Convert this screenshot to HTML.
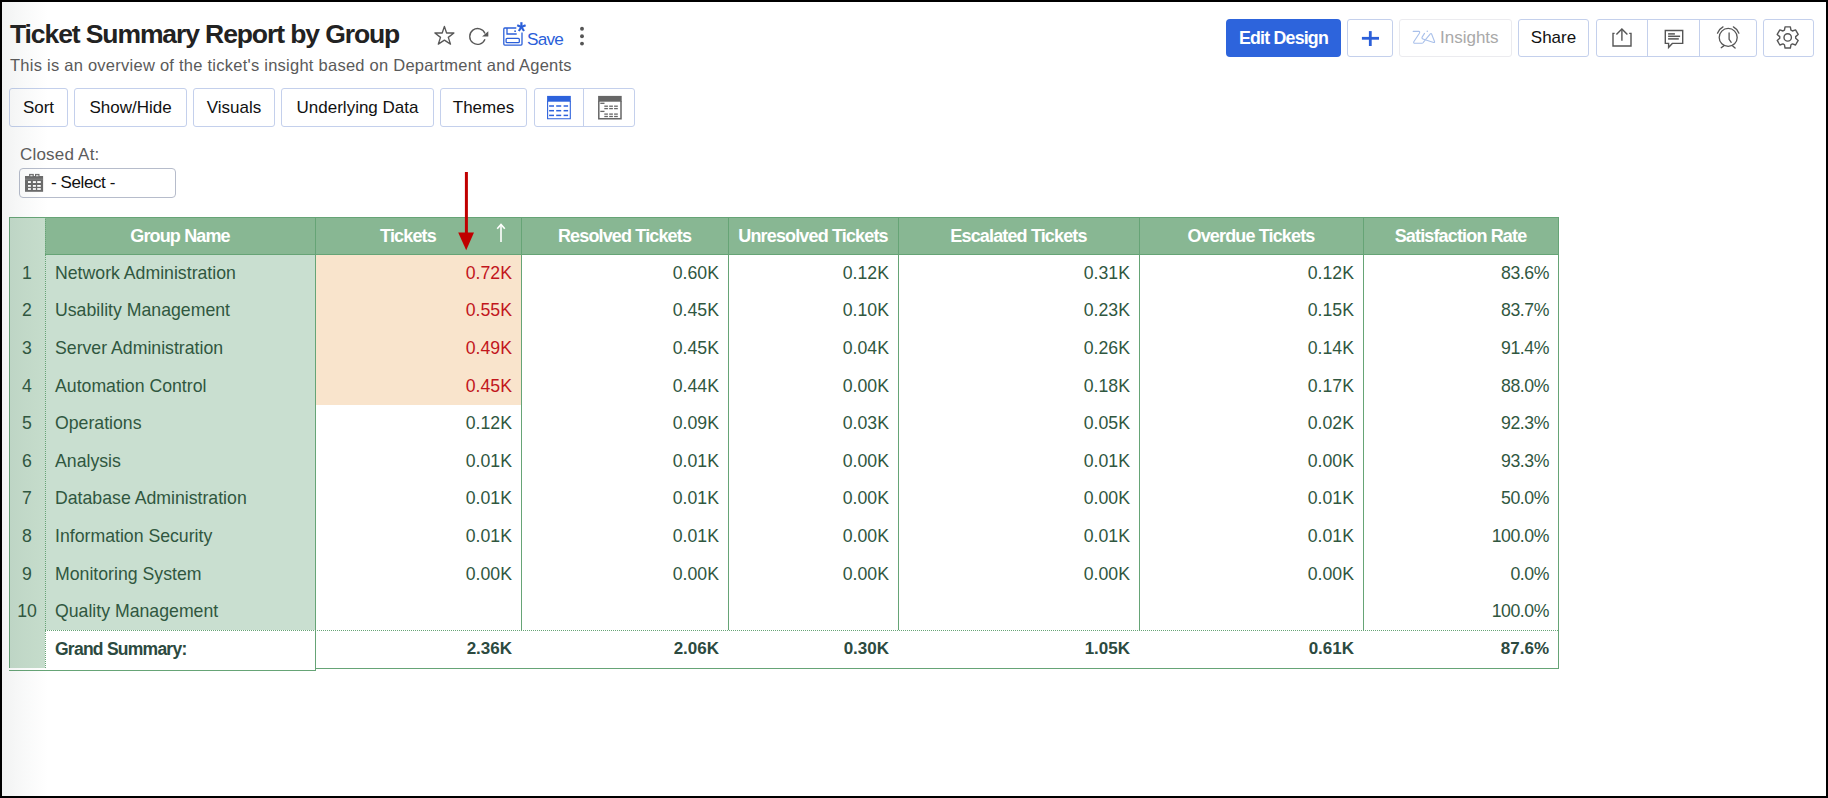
<!DOCTYPE html>
<html><head><meta charset="utf-8"><title>Ticket Summary Report by Group</title>
<style>
*{margin:0;padding:0;box-sizing:border-box}
html,body{width:1828px;height:798px;overflow:hidden;background:#fff}
body{position:relative;font-family:"Liberation Sans",sans-serif;color:#222}
.a{position:absolute;white-space:nowrap}
.frame{position:absolute;left:0;top:0;width:1828px;height:798px;border-style:solid;border-color:#000;border-width:2px;z-index:50}
.shade{position:absolute;left:2px;top:2px;width:46px;height:794px;background:linear-gradient(to right,rgba(60,80,80,0.07),rgba(60,80,80,0.03) 50%,rgba(60,80,80,0));z-index:40}
.btn{position:absolute;border:1px solid #c4d0ec;border-radius:3px;background:#fff}
.tb{font-size:17px;color:#111;line-height:22px;text-align:center}
.hd{position:absolute;color:#fff;font-weight:bold;font-size:18px;letter-spacing:-0.85px;text-align:center;line-height:20px}
.cell{position:absolute;font-size:17.7px;color:#30573f;line-height:22px}
.gs{font-weight:bold;font-size:17px;color:#2c4a40}
</style></head>
<body>
<div class="frame"></div><div class="shade"></div><div class="a" id="title" style="left:10px;top:17.7px;font-size:26.5px;font-weight:bold;color:#222;letter-spacing:-1.1px;line-height:32px">Ticket Summary Report by Group</div><div class="a" id="sub" style="left:10px;top:54.5px;font-size:16.5px;color:#5a5a5a;letter-spacing:0.25px;line-height:20px">This is an overview of the ticket's insight based on Department and Agents</div><svg class="a" style="left:428px;top:18px" width="66" height="34" viewBox="0 0 66 34">
<polygon points="16.4,8.4 18.6,15.0 25.9,15.0 20.3,19.4 22.5,26.1 16.4,22.1 10.3,26.1 12.5,19.4 6.9,15.0 14.2,15.0" fill="none" stroke="#585858" stroke-width="1.35" stroke-linejoin="round"/>
<path d="M57.0,15.6 A7.9,7.9 0 1 0 57.0,21.3" fill="none" stroke="#585858" stroke-width="1.35"/>
<polygon points="54.1,18.6 60.3,13.2 60.3,18.6" fill="#585858"/>
</svg><svg class="a" style="left:498px;top:16px" width="34" height="34" viewBox="0 0 34 34">
<path d="M18.3,12.0 H6.8 Q5.8,12.0 5.8,13.0 V28.1 Q5.8,29.1 6.8,29.1 H23.0 Q24.0,29.1 24.0,28.1 V16.6" fill="none" stroke="#2b5fd9" stroke-width="1.3"/>
<path d="M9.0,12 V18 H18.7" fill="none" stroke="#2b5fd9" stroke-width="1.3"/>
<rect x="8.1" y="22.3" width="13.2" height="4.4" rx="1" fill="none" stroke="#2b5fd9" stroke-width="1.3"/>
<rect x="16.3" y="14.4" width="1.6" height="1.6" fill="#2b5fd9"/>
<g stroke="#2b5fd9" stroke-width="2.2" stroke-linecap="butt"><line x1="23.4" y1="6.2" x2="23.4" y2="11"/><line x1="19.2" y1="9.2" x2="23.4" y2="11"/><line x1="27.6" y1="9.2" x2="23.4" y2="11"/><line x1="20.8" y1="15" x2="23.4" y2="11"/><line x1="26.0" y1="15" x2="23.4" y2="11"/></g>
</svg><div class="a" id="save" style="left:527px;top:28px;font-size:17.2px;color:#2b5fd9;letter-spacing:-0.8px;line-height:22px">Save</div><svg class="a" style="left:576px;top:24px" width="12" height="24" viewBox="0 0 12 24"><circle cx="6" cy="4.75" r="1.95" fill="#555"/><circle cx="6" cy="12.2" r="1.95" fill="#555"/><circle cx="6" cy="19.6" r="1.95" fill="#555"/></svg><div class="btn" style="left:9px;top:88px;width:59px;height:39px"></div><div class="a tb" style="left:9px;width:59px;top:97px"><span id="b_Sort">Sort</span></div><div class="btn" style="left:74px;top:88px;width:113px;height:39px"></div><div class="a tb" style="left:74px;width:113px;top:97px"><span id="b_Show">Show/Hide</span></div><div class="btn" style="left:193px;top:88px;width:82px;height:39px"></div><div class="a tb" style="left:193px;width:82px;top:97px"><span id="b_Visu">Visuals</span></div><div class="btn" style="left:281px;top:88px;width:153px;height:39px"></div><div class="a tb" style="left:281px;width:153px;top:97px"><span id="b_Unde">Underlying Data</span></div><div class="btn" style="left:440px;top:88px;width:87px;height:39px"></div><div class="a tb" style="left:440px;width:87px;top:97px"><span id="b_Them">Themes</span></div><div class="btn" style="left:534px;top:88px;width:101px;height:39px"></div><div class="a" style="left:583px;top:89px;width:1px;height:37px;background:#c4d0ec"></div><svg class="a" style="left:540px;top:90px" width="90" height="34" viewBox="0 0 90 34">
<rect x="7.1" y="5.9" width="23.7" height="5.8" fill="#2d62dc"/>
<path d="M7.6,11 V28.8 H30.3 V11" fill="none" stroke="#2d62dc" stroke-width="1.1"/>
<g stroke="#2d62dc" stroke-width="1.5"><line x1="9.1" y1="16" x2="14" y2="16"/><line x1="16.2" y1="16" x2="21.2" y2="16"/><line x1="23.6" y1="16" x2="28.1" y2="16"/>
<line x1="9.1" y1="20.7" x2="14" y2="20.7"/><line x1="16.2" y1="20.7" x2="21.2" y2="20.7"/><line x1="23.6" y1="20.7" x2="28.1" y2="20.7"/>
<line x1="9.1" y1="25.4" x2="14" y2="25.4"/><line x1="16.2" y1="25.4" x2="21.2" y2="25.4"/><line x1="23.6" y1="25.4" x2="28.1" y2="25.4"/></g>
<rect x="58.1" y="5.9" width="23.6" height="5.8" fill="#666"/>
<path d="M58.8,11 V28.8 H81 V11" fill="none" stroke="#666" stroke-width="1.5"/>
<g stroke="#666" stroke-width="1.3"><line x1="60.3" y1="13.3" x2="64.5" y2="13.3"/><line x1="60.3" y1="21.4" x2="64.5" y2="21.4"/>
<line x1="64.3" y1="16.2" x2="67.9" y2="16.2"/><line x1="69.2" y1="16.2" x2="72.9" y2="16.2"/><line x1="74.1" y1="16.2" x2="77.8" y2="16.2"/>
<line x1="64.3" y1="18.6" x2="67.9" y2="18.6"/><line x1="69.2" y1="18.6" x2="72.9" y2="18.6"/><line x1="74.1" y1="18.6" x2="77.8" y2="18.6"/>
<line x1="64.3" y1="24.1" x2="67.9" y2="24.1"/><line x1="69.2" y1="24.1" x2="72.9" y2="24.1"/><line x1="74.1" y1="24.1" x2="77.8" y2="24.1"/>
<line x1="64.3" y1="26.5" x2="67.9" y2="26.5"/><line x1="69.2" y1="26.5" x2="72.9" y2="26.5"/><line x1="74.1" y1="26.5" x2="77.8" y2="26.5"/></g>
</svg><div class="a" id="closed" style="left:20px;top:145px;font-size:17px;color:#5c5c5c;letter-spacing:0.2px;line-height:20px">Closed At:</div><div class="a" style="left:19px;top:168px;width:157px;height:30px;border:1px solid #b6bccb;border-radius:4px;background:#fff"></div><div class="a" id="select" style="left:51px;top:173px;font-size:17px;color:#111;letter-spacing:-0.4px;line-height:20px">- Select -</div><svg class="a" style="left:16px;top:164px" width="30" height="32" viewBox="0 0 30 32">
<rect x="9" y="12" width="18.1" height="15.8" fill="#6b6b6b"/>
<rect x="13.1" y="9.9" width="4.7" height="4" fill="#6b6b6b"/><rect x="19" y="9.9" width="4.5" height="4" fill="#6b6b6b"/><rect x="14.3" y="10.9" width="2.3" height="1.4" fill="#ddd"/><rect x="20.1" y="10.9" width="2.3" height="1.4" fill="#ddd"/><rect x="9" y="14.8" width="18.1" height="0.6" fill="#999"/>
<g fill="#fff"><rect x="12" y="17.1" width="2.9" height="1.9"/><rect x="16.9" y="17.1" width="3" height="1.9"/><rect x="21.2" y="17.1" width="3.6" height="1.9"/>
<rect x="12" y="21" width="2.9" height="1.8"/><rect x="16.9" y="21" width="3" height="1.8"/><rect x="21.2" y="21" width="3.6" height="1.8"/>
<rect x="12" y="24.1" width="2.9" height="1.8"/><rect x="16.9" y="24.1" width="3" height="1.8"/><rect x="21.2" y="24.1" width="3.6" height="1.8"/></g>
</svg><div class="a" style="left:1226px;top:19px;width:115px;height:38px;background:#2d64dc;border-radius:4px"></div><div class="a" style="left:1226px;top:27px;width:115px;line-height:22px;text-align:center;color:#fff;font-size:17.8px;font-weight:bold;letter-spacing:-0.8px"><span id="edit">Edit Design</span></div><div class="btn" style="left:1347px;top:19px;width:46px;height:38px"></div><svg class="a" style="left:1352px;top:20px" width="36" height="36" viewBox="0 0 36 36"><rect x="9.9" y="16.9" width="17.1" height="2.8" fill="#2b5fd9"/><rect x="16.9" y="11.1" width="2.8" height="14.9" fill="#2b5fd9"/></svg><div class="btn" style="left:1399px;top:19px;width:113px;height:38px;border-color:#ebebef"></div><svg class="a" style="left:1408px;top:26px" width="32" height="22" viewBox="0 0 32 22">
<path d="M5.2,5.4 H10.8 Q12.2,5.6 11.4,7.2 L5.8,15.8 Q5.2,17.3 7,17.3 H13.8 Q14.8,17.3 15.5,16.2 L22.3,7.8 Q23.1,7.0 23.6,8.0 L26.6,15.8 Q26.7,16.8 25.6,16.5 L17.2,13.8 Q13.4,12.9 14,11.4 L16.5,7.4" fill="none" stroke="#a9c0ea" stroke-width="1.1" stroke-linejoin="round" stroke-linecap="round"/>
<circle cx="19.3" cy="5.2" r="0.8" fill="#a9c0ea"/></svg><div class="a" id="insights" style="left:1440px;top:27px;line-height:22px;color:#a9a9a9;font-size:17px;letter-spacing:0px">Insights</div><div class="btn" style="left:1518px;top:19px;width:71px;height:38px"></div><div class="a" style="left:1518px;top:27px;width:71px;text-align:center;line-height:22px;color:#111;font-size:17px"><span id="share">Share</span></div><div class="btn" style="left:1596px;top:19px;width:161px;height:38px"></div><div class="a" style="left:1647px;top:20px;width:1px;height:36px;background:#c4d0ec"></div><div class="a" style="left:1699px;top:20px;width:1px;height:36px;background:#c4d0ec"></div><div class="btn" style="left:1763px;top:19px;width:51px;height:38px"></div><svg class="a" style="left:1600px;top:20px" width="210" height="36" viewBox="0 0 210 36">
<g fill="none" stroke="#555" stroke-width="1.4">
<path d="M14.6,13.4 H13 V26 H31 V13.4 H29.2"/>
<path d="M21.9,20.8 V9.2"/><path d="M16.4,14.4 L21.9,8.9 L27.4,14.4"/>
<path d="M65.3,10.5 H82.7 V23.4 H72.3 L68.6,27.4 V23.4 H65.3 Z"/>
</g>
<g stroke="#555" stroke-width="1.5"><line x1="68.1" y1="13.9" x2="74.9" y2="13.9"/><line x1="68.1" y1="16.3" x2="80.1" y2="16.3"/><line x1="68.1" y1="18.9" x2="78.8" y2="18.9"/></g>
<g fill="none" stroke="#555" stroke-width="1.3" stroke-linecap="round">
<circle cx="128.2" cy="17.45" r="9"/>
<path d="M117.5,13.2 A11.8,11.8 0 0 1 123.0,6.9"/><path d="M133.4,6.9 A11.8,11.8 0 0 1 138.9,13.2"/>
<path d="M129.1,12.9 V19.3 L131.2,22.3"/>
<path d="M121.2,27.7 L123.7,25.9"/><path d="M132.7,25.9 L135.1,28"/>
</g>
<g transform="translate(187.7,17.45)" fill="none" stroke="#555" stroke-width="1.4" stroke-linejoin="round">
<path d="M-3.25,-7.31 L-2.64,-10.58 L2.64,-10.58 L3.25,-7.31 L4.70,-6.47 L7.84,-7.57 L10.48,-3.00 L7.96,-0.84 L7.96,0.84 L10.48,3.00 L7.84,7.57 L4.70,6.47 L3.25,7.31 L2.64,10.58 L-2.64,10.58 L-3.25,7.31 L-4.70,6.47 L-7.84,7.57 L-10.48,3.00 L-7.96,0.84 L-7.96,-0.84 L-10.48,-3.00 L-7.84,-7.57 L-4.70,-6.47Z"/>
<circle cx="0" cy="0" r="3.7"/>
</g>
</svg>
<div class="a" style="left:9px;top:217px;width:1550px;height:38px;background:#88b793"></div><div class="a" style="left:9px;top:217px;width:36px;height:451px;background:#c6ddcc"></div><div class="a" style="left:45px;top:254px;width:270px;height:376px;background:#c9dfd0"></div><div class="a" style="left:316px;top:255px;width:205px;height:150px;background:#f9e4cc"></div><div class="a" style="left:9px;top:217px;width:1550px;height:1px;background:#66a476"></div><div class="a" style="left:9px;top:217px;width:1px;height:451px;background:#66a476"></div><div class="a" style="left:1558px;top:217px;width:1px;height:452px;background:#66a476"></div><div class="a" style="left:315px;top:668px;width:1244px;height:1px;background:#66a476"></div><div class="a" style="left:9px;top:670px;width:307px;height:1px;background:#66a476"></div><div class="a" style="left:45px;top:254px;width:1514px;height:1px;background:#66a476"></div><div class="a" style="left:315px;top:217px;width:1px;height:413px;background:#66a476"></div><div class="a" style="left:521px;top:217px;width:1px;height:413px;background:#66a476"></div><div class="a" style="left:728px;top:217px;width:1px;height:413px;background:#66a476"></div><div class="a" style="left:898px;top:217px;width:1px;height:413px;background:#66a476"></div><div class="a" style="left:1139px;top:217px;width:1px;height:413px;background:#66a476"></div><div class="a" style="left:1363px;top:217px;width:1px;height:413px;background:#66a476"></div><div class="a" style="left:315px;top:630px;width:1px;height:40px;background:#66a476"></div><div class="a" style="left:45px;top:217px;width:0;height:451px;border-left:1px dotted #66a476"></div><div class="a" style="left:45px;top:630px;width:1513px;height:0;border-top:1px dotted #66a476"></div><div class="hd a" style="left:45px;width:270px;top:226px;"><span id="h_Grou">Group Name</span></div><div class="hd a" style="left:315px;width:206px;top:226px;padding-right:20px;"><span id="h_Tick">Tickets</span></div><div class="hd a" style="left:521px;width:207px;top:226px;"><span id="h_Reso">Resolved Tickets</span></div><div class="hd a" style="left:728px;width:170px;top:226px;"><span id="h_Unre">Unresolved Tickets</span></div><div class="hd a" style="left:898px;width:241px;top:226px;"><span id="h_Esca">Escalated Tickets</span></div><div class="hd a" style="left:1139px;width:224px;top:226px;"><span id="h_Over">Overdue Tickets</span></div><div class="hd a" style="left:1363px;width:195px;top:226px;"><span id="h_Sati">Satisfaction Rate</span></div><div class="cell a" style="left:9px;width:36px;text-align:center;top:261.8px"><span id="n0">1</span></div><div class="cell a" style="left:55px;top:261.8px" id="g0">Network Administration</div><div class="cell a" style="right:1316px;top:261.8px;color:#c2161c;" id="v0_0">0.72K</div><div class="cell a" style="right:1109px;top:261.8px;" id="v0_1">0.60K</div><div class="cell a" style="right:939px;top:261.8px;" id="v0_2">0.12K</div><div class="cell a" style="right:698px;top:261.8px;" id="v0_3">0.31K</div><div class="cell a" style="right:474px;top:261.8px;" id="v0_4">0.12K</div><div class="cell a" style="right:279px;top:261.8px;letter-spacing:-0.45px;" id="v0_5">83.6%</div><div class="cell a" style="left:9px;width:36px;text-align:center;top:299.4px"><span id="n1">2</span></div><div class="cell a" style="left:55px;top:299.4px" id="g1">Usability Management</div><div class="cell a" style="right:1316px;top:299.4px;color:#c2161c;" id="v1_0">0.55K</div><div class="cell a" style="right:1109px;top:299.4px;" id="v1_1">0.45K</div><div class="cell a" style="right:939px;top:299.4px;" id="v1_2">0.10K</div><div class="cell a" style="right:698px;top:299.4px;" id="v1_3">0.23K</div><div class="cell a" style="right:474px;top:299.4px;" id="v1_4">0.15K</div><div class="cell a" style="right:279px;top:299.4px;letter-spacing:-0.45px;" id="v1_5">83.7%</div><div class="cell a" style="left:9px;width:36px;text-align:center;top:337.0px"><span id="n2">3</span></div><div class="cell a" style="left:55px;top:337.0px" id="g2">Server Administration</div><div class="cell a" style="right:1316px;top:337.0px;color:#c2161c;" id="v2_0">0.49K</div><div class="cell a" style="right:1109px;top:337.0px;" id="v2_1">0.45K</div><div class="cell a" style="right:939px;top:337.0px;" id="v2_2">0.04K</div><div class="cell a" style="right:698px;top:337.0px;" id="v2_3">0.26K</div><div class="cell a" style="right:474px;top:337.0px;" id="v2_4">0.14K</div><div class="cell a" style="right:279px;top:337.0px;letter-spacing:-0.45px;" id="v2_5">91.4%</div><div class="cell a" style="left:9px;width:36px;text-align:center;top:374.6px"><span id="n3">4</span></div><div class="cell a" style="left:55px;top:374.6px" id="g3">Automation Control</div><div class="cell a" style="right:1316px;top:374.6px;color:#c2161c;" id="v3_0">0.45K</div><div class="cell a" style="right:1109px;top:374.6px;" id="v3_1">0.44K</div><div class="cell a" style="right:939px;top:374.6px;" id="v3_2">0.00K</div><div class="cell a" style="right:698px;top:374.6px;" id="v3_3">0.18K</div><div class="cell a" style="right:474px;top:374.6px;" id="v3_4">0.17K</div><div class="cell a" style="right:279px;top:374.6px;letter-spacing:-0.45px;" id="v3_5">88.0%</div><div class="cell a" style="left:9px;width:36px;text-align:center;top:412.2px"><span id="n4">5</span></div><div class="cell a" style="left:55px;top:412.2px" id="g4">Operations</div><div class="cell a" style="right:1316px;top:412.2px;" id="v4_0">0.12K</div><div class="cell a" style="right:1109px;top:412.2px;" id="v4_1">0.09K</div><div class="cell a" style="right:939px;top:412.2px;" id="v4_2">0.03K</div><div class="cell a" style="right:698px;top:412.2px;" id="v4_3">0.05K</div><div class="cell a" style="right:474px;top:412.2px;" id="v4_4">0.02K</div><div class="cell a" style="right:279px;top:412.2px;letter-spacing:-0.45px;" id="v4_5">92.3%</div><div class="cell a" style="left:9px;width:36px;text-align:center;top:449.8px"><span id="n5">6</span></div><div class="cell a" style="left:55px;top:449.8px" id="g5">Analysis</div><div class="cell a" style="right:1316px;top:449.8px;" id="v5_0">0.01K</div><div class="cell a" style="right:1109px;top:449.8px;" id="v5_1">0.01K</div><div class="cell a" style="right:939px;top:449.8px;" id="v5_2">0.00K</div><div class="cell a" style="right:698px;top:449.8px;" id="v5_3">0.01K</div><div class="cell a" style="right:474px;top:449.8px;" id="v5_4">0.00K</div><div class="cell a" style="right:279px;top:449.8px;letter-spacing:-0.45px;" id="v5_5">93.3%</div><div class="cell a" style="left:9px;width:36px;text-align:center;top:487.4px"><span id="n6">7</span></div><div class="cell a" style="left:55px;top:487.4px" id="g6">Database Administration</div><div class="cell a" style="right:1316px;top:487.4px;" id="v6_0">0.01K</div><div class="cell a" style="right:1109px;top:487.4px;" id="v6_1">0.01K</div><div class="cell a" style="right:939px;top:487.4px;" id="v6_2">0.00K</div><div class="cell a" style="right:698px;top:487.4px;" id="v6_3">0.00K</div><div class="cell a" style="right:474px;top:487.4px;" id="v6_4">0.01K</div><div class="cell a" style="right:279px;top:487.4px;letter-spacing:-0.45px;" id="v6_5">50.0%</div><div class="cell a" style="left:9px;width:36px;text-align:center;top:525.0px"><span id="n7">8</span></div><div class="cell a" style="left:55px;top:525.0px" id="g7">Information Security</div><div class="cell a" style="right:1316px;top:525.0px;" id="v7_0">0.01K</div><div class="cell a" style="right:1109px;top:525.0px;" id="v7_1">0.01K</div><div class="cell a" style="right:939px;top:525.0px;" id="v7_2">0.00K</div><div class="cell a" style="right:698px;top:525.0px;" id="v7_3">0.01K</div><div class="cell a" style="right:474px;top:525.0px;" id="v7_4">0.01K</div><div class="cell a" style="right:279px;top:525.0px;letter-spacing:-0.45px;" id="v7_5">100.0%</div><div class="cell a" style="left:9px;width:36px;text-align:center;top:562.6px"><span id="n8">9</span></div><div class="cell a" style="left:55px;top:562.6px" id="g8">Monitoring System</div><div class="cell a" style="right:1316px;top:562.6px;" id="v8_0">0.00K</div><div class="cell a" style="right:1109px;top:562.6px;" id="v8_1">0.00K</div><div class="cell a" style="right:939px;top:562.6px;" id="v8_2">0.00K</div><div class="cell a" style="right:698px;top:562.6px;" id="v8_3">0.00K</div><div class="cell a" style="right:474px;top:562.6px;" id="v8_4">0.00K</div><div class="cell a" style="right:279px;top:562.6px;letter-spacing:-0.45px;" id="v8_5">0.0%</div><div class="cell a" style="left:9px;width:36px;text-align:center;top:600.2px"><span id="n9">10</span></div><div class="cell a" style="left:55px;top:600.2px" id="g9">Quality Management</div><div class="cell a" style="right:279px;top:600.2px;letter-spacing:-0.45px;" id="v9_5">100.0%</div><div class="cell gs a" style="left:55px;top:637.8px;letter-spacing:-0.75px;font-size:17.5px" id="gs">Grand Summary:</div><div class="cell gs a" style="right:1316px;top:637.8px" id="gs0">2.36K</div><div class="cell gs a" style="right:1109px;top:637.8px" id="gs1">2.06K</div><div class="cell gs a" style="right:939px;top:637.8px" id="gs2">0.30K</div><div class="cell gs a" style="right:698px;top:637.8px" id="gs3">1.05K</div><div class="cell gs a" style="right:474px;top:637.8px" id="gs4">0.61K</div><div class="cell gs a" style="right:279px;top:637.8px" id="gs5">87.6%</div><svg class="a" style="left:450px;top:170px;z-index:30" width="30" height="84" viewBox="0 0 30 84"><line x1="16.4" y1="2" x2="16.4" y2="66" stroke="#c00000" stroke-width="3"/><polygon points="8.2,62.6 24,62.6 16.2,80.3" fill="#c00000"/></svg><svg class="a" style="left:494px;top:222px" width="14" height="22" viewBox="0 0 14 22"><line x1="7" y1="3" x2="7" y2="20" stroke="#fff" stroke-width="1.6"/><polyline points="3.2,6.8 7,2.4 10.8,6.8" fill="none" stroke="#fff" stroke-width="1.6"/></svg>
</body></html>
